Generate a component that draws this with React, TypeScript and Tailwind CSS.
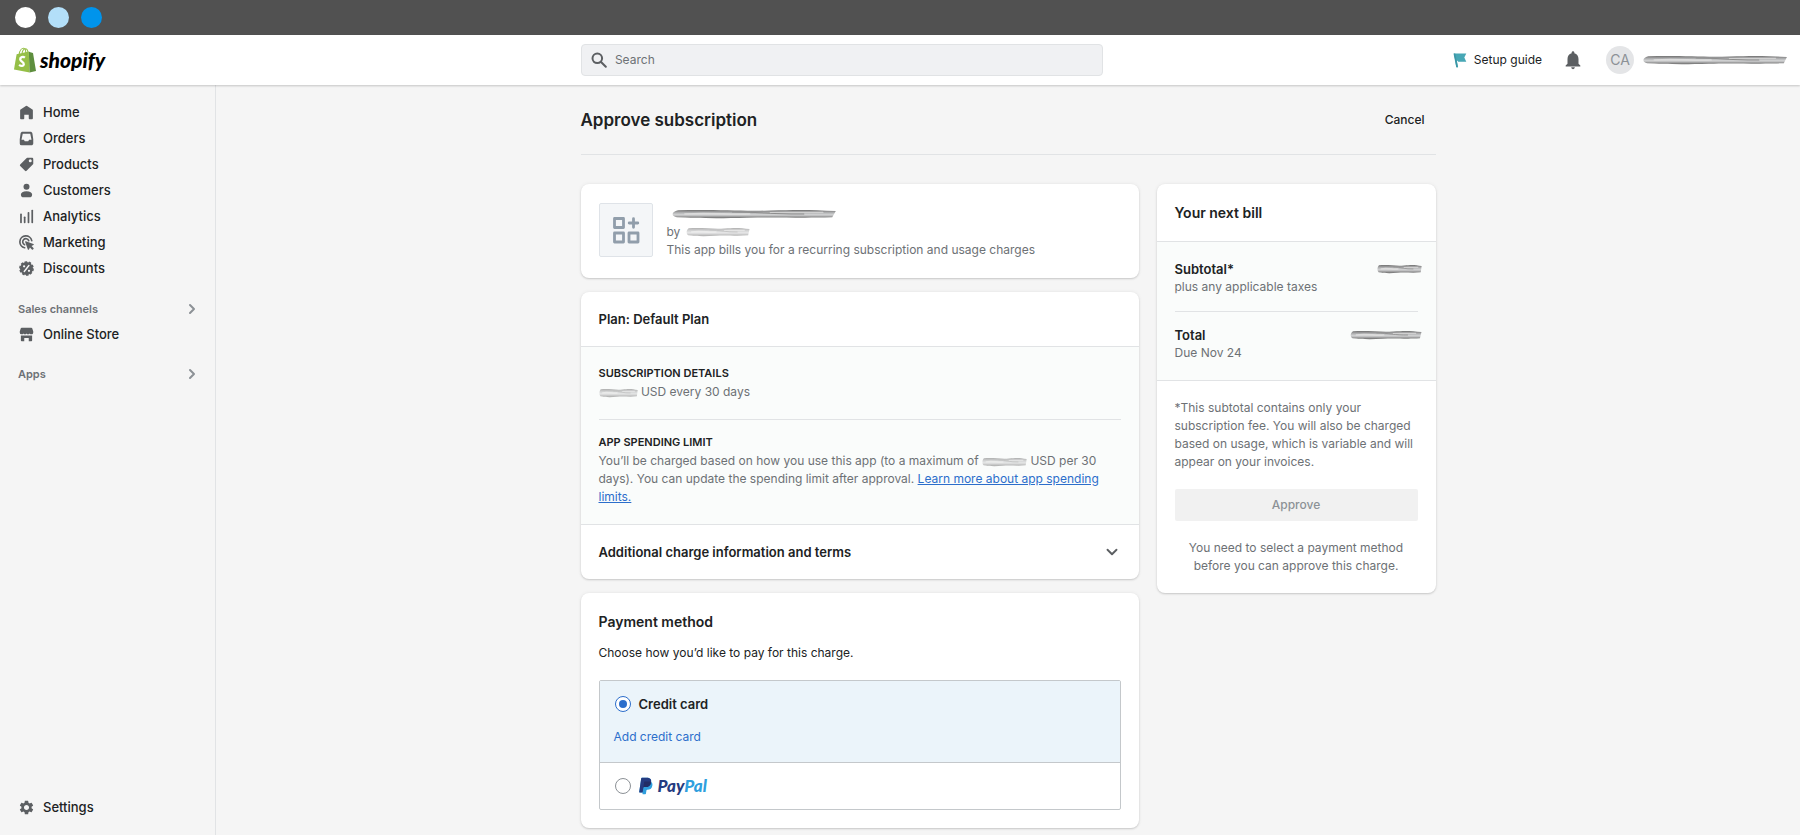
import React, { useId, useState } from "react";
import { ChevronDown, ChevronRight } from "lucide-react";
import { MdNotifications, MdSettings } from "react-icons/md";

type NavItem = {
  label: string;
  icon: React.ReactNode;
};

function Glyph({ children }: { children: React.ReactNode }) {
  return (
    <svg
      viewBox="0 0 20 20"
      className="size-[15px] shrink-0 fill-[#5c5f62]"
      aria-hidden="true"
    >
      {children}
    </svg>
  );
}

const navItems: NavItem[] = [
  {
    label: "Home",
    icon: (
      <Glyph>
        <path d="M18.5 7.3v10.2c0 .8-.7 1.5-1.5 1.5h-2.5c-.8 0-1.5-.7-1.5-1.5V13H7v4.5C7 18.3 6.3 19 5.5 19H3c-.8 0-1.5-.7-1.5-1.5V7.3c0-.5.2-1 .6-1.2l7.1-4.9a1.5 1.5 0 0 1 1.6 0l7.1 4.9c.4.2.6.7.6 1.2z" />
      </Glyph>
    ),
  },
  {
    label: "Orders",
    icon: (
      <Glyph>
        <path
          fillRule="evenodd"
          d="M5 1h10c1.5 0 2.6.9 2.9 2.2L19 11v5.5c0 1.4-1.1 2.5-2.5 2.5h-13A2.5 2.5 0 0 1 1 16.5V11l1.1-7.8C2.4 1.9 3.5 1 5 1zm0 2.5L3.3 11.5h3.2l1.2 2.3h4.6l1.2-2.3h3.2L15 3.5z"
        />
      </Glyph>
    ),
  },
  {
    label: "Products",
    icon: (
      <Glyph>
        <path
          fillRule="evenodd"
          d="M10.3 1.3A1 1 0 0 1 11 1h6.5A1.5 1.5 0 0 1 19 2.5V9a1 1 0 0 1-.3.7l-8.6 8.7a1.5 1.5 0 0 1-2.1 0L1.6 12a1.5 1.5 0 0 1 0-2.1zM15 7a2 2 0 1 0 0-4 2 2 0 0 0 0 4z"
        />
      </Glyph>
    ),
  },
  {
    label: "Customers",
    icon: (
      <Glyph>
        <circle cx="10" cy="5" r="4" />
        <path d="M2.5 15.5c0-2.6 2.8-4.5 7.5-4.5s7.5 1.9 7.5 4.5c0 2-1.5 3.5-3.5 3.5H6c-2 0-3.5-1.5-3.5-3.5z" />
      </Glyph>
    ),
  },
  {
    label: "Analytics",
    icon: (
      <Glyph>
        <rect x="1.5" y="6" width="2.3" height="13" rx="1" />
        <rect x="6.4" y="10" width="2.3" height="9" rx="1" />
        <rect x="11.5" y="4" width="2.3" height="15" rx="1" />
        <rect x="16.5" y="1" width="2.3" height="18" rx="1" />
      </Glyph>
    ),
  },
  {
    label: "Marketing",
    icon: (
      <Glyph>
        <g fill="none" stroke="#5c5f62" strokeWidth="2.2" strokeLinecap="round">
          <path d="M17 7.5A8 8 0 1 0 7.5 17" />
          <path d="M13 7.5A4.2 4.2 0 1 0 7.5 13" />
        </g>
        <path d="M9.2 8.3l10 3.6c.7.3.7 1.2.1 1.5l-2.6 1.3 2.6 2.6c.4.4.4.9 0 1.3l-.8.8c-.4.4-.9.4-1.3 0l-2.6-2.6-1.3 2.5c-.3.7-1.2.6-1.5-.1l-3.6-9.9c-.2-.6.4-1.2 1-1z" />
      </Glyph>
    ),
  },
  {
    label: "Discounts",
    icon: (
      <Glyph>
        <circle cx="10" cy="10" r="8.7" />
        <circle
          cx="10"
          cy="10"
          r="8.8"
          fill="none"
          stroke="#5c5f62"
          strokeWidth="2"
          strokeDasharray="3.4 2.129"
        />
        <path d="M7 14l6.2-8" stroke="#f5f5f5" strokeWidth="1.9" strokeLinecap="round" />
        <circle cx="6.8" cy="7" r="1.5" fill="#f5f5f5" />
        <circle cx="13.3" cy="13" r="1.5" fill="#f5f5f5" />
      </Glyph>
    ),
  },
];

const storeIcon = (
  <Glyph>
    <path d="M3.5 1h13c.5 0 .9.3 1.1.7L19 6v1.2c0 1.5-1.2 2.6-2.6 2.6-1.1 0-1.9-.5-2.2-1.2-.4.7-1.2 1.2-2.1 1.2-.9 0-1.7-.5-2.1-1.2-.4.7-1.2 1.2-2.1 1.2S6.2 9.3 5.8 8.6C5.5 9.3 4.7 9.8 3.6 9.8A2.6 2.6 0 0 1 1 7.2V6l1.4-4.3c.2-.4.6-.7 1.1-.7z" />
    <path d="M2.5 11.3h15V18c0 .6-.4 1-1 1H13v-4.5H7V19H3.5c-.6 0-1-.4-1-1z" />
  </Glyph>
);

function NavLink({ label, icon }: NavItem) {
  return (
    <a
      href="#"
      className="flex h-[26px] items-center gap-[9px] pl-[19px] font-medium text-[#202223]"
    >
      {icon}
      {label}
    </a>
  );
}

function NavHeading({ label }: { label: string }) {
  return (
    <button
      type="button"
      className="flex h-6 w-full items-center justify-between pr-[15px] pl-[18px] text-[11px] font-semibold text-[#6d7175]"
    >
      {label}
      <ChevronRight className="size-4 text-[#8c9196]" strokeWidth={3} />
    </button>
  );
}

/* Smudge that hides a private value */
function Redacted({ className, faint }: { className: string; faint?: boolean }) {
  const id = useId();

  return (
    <svg
      viewBox="0 0 140 12"
      preserveAspectRatio="none"
      className={`inline-block shrink-0 blur-[0.7px] ${className} ${faint ? "opacity-55" : ""}`}
      role="img"
      aria-label="Hidden"
    >
      <defs>
        <linearGradient id={id} x1="0" y1="0" x2="0" y2="1">
          <stop offset="0" stopColor="#6f6f6f" />
          <stop offset="0.35" stopColor="#b4b5b6" />
          <stop offset="0.6" stopColor="#d4d5d6" />
          <stop offset="1" stopColor="#6a6a6a" />
        </linearGradient>
      </defs>
      <path
        d="M6 1.500C40 .5 60 3 84 1.800S120 1 139 2.500L136 10C105 11 88 9.500 64 10.500S20 11 5 10C0 8 0 4 6 1.500z"
        fill={`url(#${id})`}
      />
      <g fill="none" strokeLinecap="round">
        <path d="M12 6C34 4.500 50 7 66 6" stroke="#dcdcdc" strokeWidth="2" />
        <path d="M52 3.500C74 3.500 88 6.500 112 6" stroke="#8d8d8d" strokeWidth="1.200" />
        <path d="M84 4.200C100 3.500 112 4.500 128 4" stroke="#d0d0d0" strokeWidth="1.500" />
      </g>
    </svg>
  );
}

function ShopifyLogo() {
  return (
    <a href="#" aria-label="shopify" className="flex items-center gap-1 text-black">
      <svg viewBox="0 0 22 26" className="h-[26px] w-[22px]" aria-hidden="true">
        <path
          d="M5.2 7C5.7 3.6 7.7 1 9.8 1.2c1.3.1 1.9 1.5 2 4.8M8 6.5c.4-2.8 1.8-4.6 3.4-4.7 1.5 0 2.3 1.5 2.6 3.7"
          fill="none"
          stroke="#95bf47"
          strokeWidth="1.1"
        />
        <path d="M2.6 7.2L14.8 4.4l.8 21.1L0 22.6z" fill="#95bf47" />
        <path d="M14.8 4.4l1.5.9 2.7.7L22 23.9l-6.4 1.6z" fill="#5e8e3e" />
        <path
          d="M10.9 10.6c-2-1.5-4.8-.4-4.7 1.7.1 2.6 3.8 2.5 3.6 5-.2 1.9-2.5 2.2-4.7.5"
          fill="none"
          stroke="#fff"
          strokeWidth="2.3"
        />
      </svg>
      <span className="font-[Lato,sans-serif] text-[21px] leading-6 font-black italic">
        shopify
      </span>
    </a>
  );
}

function PayPalLogo() {
  return (
    <span className="flex items-center gap-[5px]">
      <svg viewBox="1 2 23 28" className="h-[18px] w-[14px]" aria-hidden="true">
        <path
          fill="#2f9fde"
          d="M20.905 9.5C21.185 7.4 20.905 6 19.782 4.7 18.564 3.3 16.411 2.6 13.697 2.6H5.739C5.271 2.6 4.71 3.1 4.615 3.6L1.339 25.8C1.339 26.2 1.62 26.7 2.088 26.7H6.956L6.675 28.9C6.581 29.3 6.862 29.6 7.236 29.6H11.356C11.825 29.6 12.292 29.3 12.386 28.8V28.5L13.228 23.3V23.1C13.322 22.6 13.79 22.2 14.258 22.2H14.821C18.845 22.2 21.935 20.5 22.871 15.5 23.339 13.4 23.153 11.7 22.029 10.5 21.748 10.1 21.279 9.8 20.905 9.5"
        />
        <path
          fill="#253b80"
          d="M20.905 9.5C21.185 7.4 20.905 6 19.782 4.7 18.564 3.3 16.411 2.6 13.697 2.6H5.739C5.271 2.6 4.71 3.1 4.615 3.6L1.339 25.8C1.339 26.2 1.62 26.7 2.088 26.7H6.956L8.267 18.4 8.173 18.7C8.267 18.1 8.735 17.7 9.296 17.7H11.636C16.224 17.7 19.782 15.7 20.905 10.1 20.812 9.8 20.905 9.7 20.905 9.5"
        />
        <path
          fill="#222d65"
          d="M9.485 9.5C9.577 9.2 9.765 8.9 10.046 8.7 10.232 8.7 10.326 8.6 10.513 8.6H16.692C18.4 8.6 19.8 8.8 20.905 9.5V10.1C19.782 15.7 16.224 17.7 11.636 17.7H9.296C8.735 17.7 8.267 18.1 8.173 18.7z"
        />
      </svg>
      <span className="font-[Lato,sans-serif] text-[17px] leading-[18px] font-black text-[#253b80] italic">
        Pay<span className="text-[#2f9fde]">Pal</span>
      </span>
    </span>
  );
}

function Card({ children }: { children: React.ReactNode }) {
  return (
    <section className="overflow-hidden rounded-lg bg-white shadow-[0_0_4px_rgba(23,24,24,0.06),0_1px_2px_rgba(0,0,0,0.16)]">
      {children}
    </section>
  );
}

function TopBar() {
  return (
    <header className="relative grid h-[50px] grid-cols-[5fr_522px_6fr] items-center bg-white shadow-[0_1px_2px_rgba(0,0,0,0.2)]">
      <div className="pl-3.5">
        <ShopifyLogo />
      </div>

      <label className="flex h-8 items-center gap-2 rounded border border-[#e1e3e5] bg-[#f0f1f3] px-[9px]">
        <svg viewBox="0 0 16 16" className="size-4 shrink-0" aria-hidden="true">
          <g fill="none" stroke="#5c5f62" strokeWidth="2">
            <circle cx="6.3" cy="6.3" r="4.8" />
            <path d="M9.8 9.8l5 5" strokeLinecap="round" />
          </g>
        </svg>
        <input
          type="search"
          aria-label="Search"
          placeholder="Search"
          className="w-full bg-transparent text-xs outline-none placeholder:text-[#6d7175]"
        />
      </label>

      <div className="flex items-center justify-end pr-3">
        <button type="button" className="mr-5 flex items-center gap-[7px] text-xs text-[#202223]">
          <svg viewBox="0 0 14 15" className="h-[15px] w-3.5" aria-hidden="true">
            <path d="M1 .5h12.3l-2 4 2 4.3H5.2L4.5 7.8H3.9L5 14.3H3.3z" fill="#47a7b5" />
            <path d="M.5.5h1.7L5 14.3H3.3z" fill="#3c97a6" />
          </svg>
          Setup guide
        </button>
        <button type="button" aria-label="Notifications" className="mr-[22px]">
          <MdNotifications className="size-[22px] text-[#5c5f62]" />
        </button>
        <span className="mr-2 flex size-7 items-center justify-center rounded-full bg-[#e4e5e7] text-sm text-[#8c9196]">
          CA
        </span>
        <Redacted className="h-2.5 w-[146px]" />
      </div>
    </header>
  );
}

function Sidebar() {
  return (
    <aside className="flex w-[216px] shrink-0 flex-col border-r border-[#e1e3e5] pt-3.5 pb-[15px]">
      <nav>
        {navItems.map((item) => (
          <NavLink key={item.label} {...item} />
        ))}
      </nav>

      <div className="mt-4">
        <NavHeading label="Sales channels" />
        <NavLink label="Online Store" icon={storeIcon} />
      </div>

      <div className="mt-[15px]">
        <NavHeading label="Apps" />
      </div>

      <div className="mt-auto">
        <NavLink
          label="Settings"
          icon={<MdSettings className="-mx-px size-[17px] shrink-0 text-[#5c5f62]" />}
        />
      </div>
    </aside>
  );
}

function AppCard() {
  return (
    <Card>
      <div className="flex items-start gap-3.5 px-[18px] py-[19px]">
        <div className="flex size-[54px] items-center justify-center rounded-xs border border-[#dfe3e8] bg-[#f4f6f8]">
          <svg viewBox="0 0 28 28" className="size-7" aria-hidden="true">
            <g fill="none" stroke="#919eab" strokeWidth="2.8" strokeLinejoin="round">
              <rect x="2.5" y="2.5" width="9" height="9" />
              <rect x="2.5" y="17" width="9" height="9" />
              <rect x="17" y="17" width="9" height="9" />
              <path d="M21.5 2.7v8.6M17.2 7h8.6" strokeLinecap="round" />
            </g>
          </svg>
        </div>
        <div className="pt-0.5 text-xs leading-[18px] text-[#6d7175]">
          <div className="flex h-[18px] items-center pl-1">
            <Redacted className="h-2.5 w-[166px]" />
          </div>
          <p className="flex items-center gap-1.5">
            by <Redacted className="h-2.5 w-16" faint />
          </p>
          <p>This app bills you for a recurring subscription and usage charges</p>
        </div>
      </div>
    </Card>
  );
}

function PlanCard() {
  return (
    <Card>
      <h2 className="p-[18px] font-semibold">Plan: Default Plan</h2>

      <div className="border-y border-[#e1e3e5] bg-[#fafcfb] px-[18px] text-xs leading-[18px] text-[#6d7175]">
        <div className="border-b border-[#e1e3e5] py-[18px]">
          <h3 className="mb-0.5 text-[11px] leading-4 font-semibold text-[#202223] uppercase">
            Subscription details
          </h3>
          <p>
            <Redacted className="h-2.5 w-[39px]" faint /> USD every 30 days
          </p>
        </div>
        <div className="pt-3.5 pb-[18px]">
          <h3 className="mb-0.5 text-[11px] leading-4 font-semibold text-[#202223] uppercase">
            App spending limit
          </h3>
          <p>
            You’ll be charged based on how you use this app (to a maximum of{" "}
            <Redacted className="h-2.5 w-[45px]" faint /> USD per 30 days). You can
            update the spending limit after approval.{" "}
            <a href="#" className="text-[#2c6ecb] underline">
              Learn more about app spending limits.
            </a>
          </p>
        </div>
      </div>

      <button
        type="button"
        className="flex w-full items-center justify-between p-[18px] text-left font-semibold"
      >
        Additional charge information and terms
        <ChevronDown className="size-[18px] text-[#5c5f62]" strokeWidth={2.5} />
      </button>
    </Card>
  );
}

const radioClass =
  "grid size-4 appearance-none place-items-center rounded-full border border-[#8c9196] bg-white before:size-2 before:rounded-full checked:border-[#2c6ecb] checked:before:bg-[#2c6ecb]";

function PaymentCard() {
  const [method, setMethod] = useState("card");

  return (
    <Card>
      <div className="px-[18px] pt-[19px] pb-[18px]">
        <h2 className="text-sm leading-5 font-semibold">Payment method</h2>
        <p className="mt-3 text-xs leading-[18px]">
          Choose how you’d like to pay for this charge.
        </p>

        <div className="mt-[18px] rounded-xs border border-[#c4c8cb]">
          <div className="border-b border-[#c4c8cb] bg-[#ebf4fa] px-3.5 pt-3.5 pb-4">
            <label className="flex h-[18px] items-center gap-2 pl-px font-semibold">
              <input
                type="radio"
                name="method"
                className={radioClass}
                checked={method === "card"}
                onChange={() => setMethod("card")}
              />
              Credit card
            </label>
            <a href="#" className="mt-[15px] block text-xs leading-[18px] text-[#2c6ecb]">
              Add credit card
            </a>
          </div>
          <div className="p-3.5">
            <label className="flex h-[18px] items-center gap-2 pl-px">
              <input
                type="radio"
                name="method"
                className={radioClass}
                checked={method === "paypal"}
                onChange={() => setMethod("paypal")}
              />
              <PayPalLogo />
            </label>
          </div>
        </div>
      </div>
    </Card>
  );
}

function BillCard() {
  return (
    <Card>
      <h2 className="px-[18px] pt-[19px] pb-[18px] text-sm leading-5 font-semibold">
        Your next bill
      </h2>

      <div className="border-y border-[#e1e3e5] bg-[#fafcfb] px-[18px]">
        <div className="flex justify-between border-b border-[#e1e3e5] pt-[18px] pb-[15px]">
          <div>
            <p className="font-semibold">Subtotal*</p>
            <p className="text-xs leading-[18px] text-[#6d7175]">plus any applicable taxes</p>
          </div>
          <Redacted className="mt-1 -mr-1 h-2.5 w-[45px]" />
        </div>
        <div className="flex justify-between pt-3.5 pb-[18px]">
          <div>
            <p className="font-semibold">Total</p>
            <p className="text-xs leading-[18px] text-[#6d7175]">Due Nov 24</p>
          </div>
          <Redacted className="mt-1 -mr-1 h-2.5 w-[72px]" />
        </div>
      </div>

      <div className="p-[18px] text-xs leading-[18px] text-[#6d7175]">
        <p>
          *This subtotal contains only your subscription fee. You will also be
          charged based on usage, which is variable and will appear on your
          invoices.
        </p>
        <button
          type="button"
          disabled
          className="my-[18px] h-8 w-full rounded-xs bg-[#f1f1f1] font-medium text-[#8c9196]"
        >
          Approve
        </button>
        <p className="text-center">
          You need to select a payment method before you can approve this charge.
        </p>
      </div>
    </Card>
  );
}

export default function App() {
  return (
    <div className="flex min-h-screen flex-col bg-[#f5f5f5] font-[Inter,sans-serif] text-[13px] leading-[18px] text-[#202223]">
      {/* Window chrome */}
      <div className="flex h-[35px] items-center gap-3 bg-[#515151] pl-[15px]">
        <span className="size-[21px] rounded-full bg-white" />
        <span className="size-[21px] rounded-full bg-[#b3dff9]" />
        <span className="size-[21px] rounded-full bg-[#0094ec]" />
      </div>

      <TopBar />

      <div className="flex grow">
        <Sidebar />

        <main className="grow px-6 pt-[23px] pb-1.5">
          <div className="mx-auto max-w-[855px]">
            <div className="flex items-center justify-between border-b border-[#e1e3e5] pb-[22px]">
              <h1 className="text-[17px] leading-6 font-semibold">Approve subscription</h1>
              <button type="button" className="pr-[11px] text-xs font-medium">
                Cancel
              </button>
            </div>

            <div className="mt-[29px] grid grid-cols-[2fr_1fr] items-start gap-[18px]">
              <div className="flex flex-col gap-3.5">
                <AppCard />
                <PlanCard />
                <PaymentCard />
              </div>
              <BillCard />
            </div>
          </div>
        </main>
      </div>
    </div>
  );
}
